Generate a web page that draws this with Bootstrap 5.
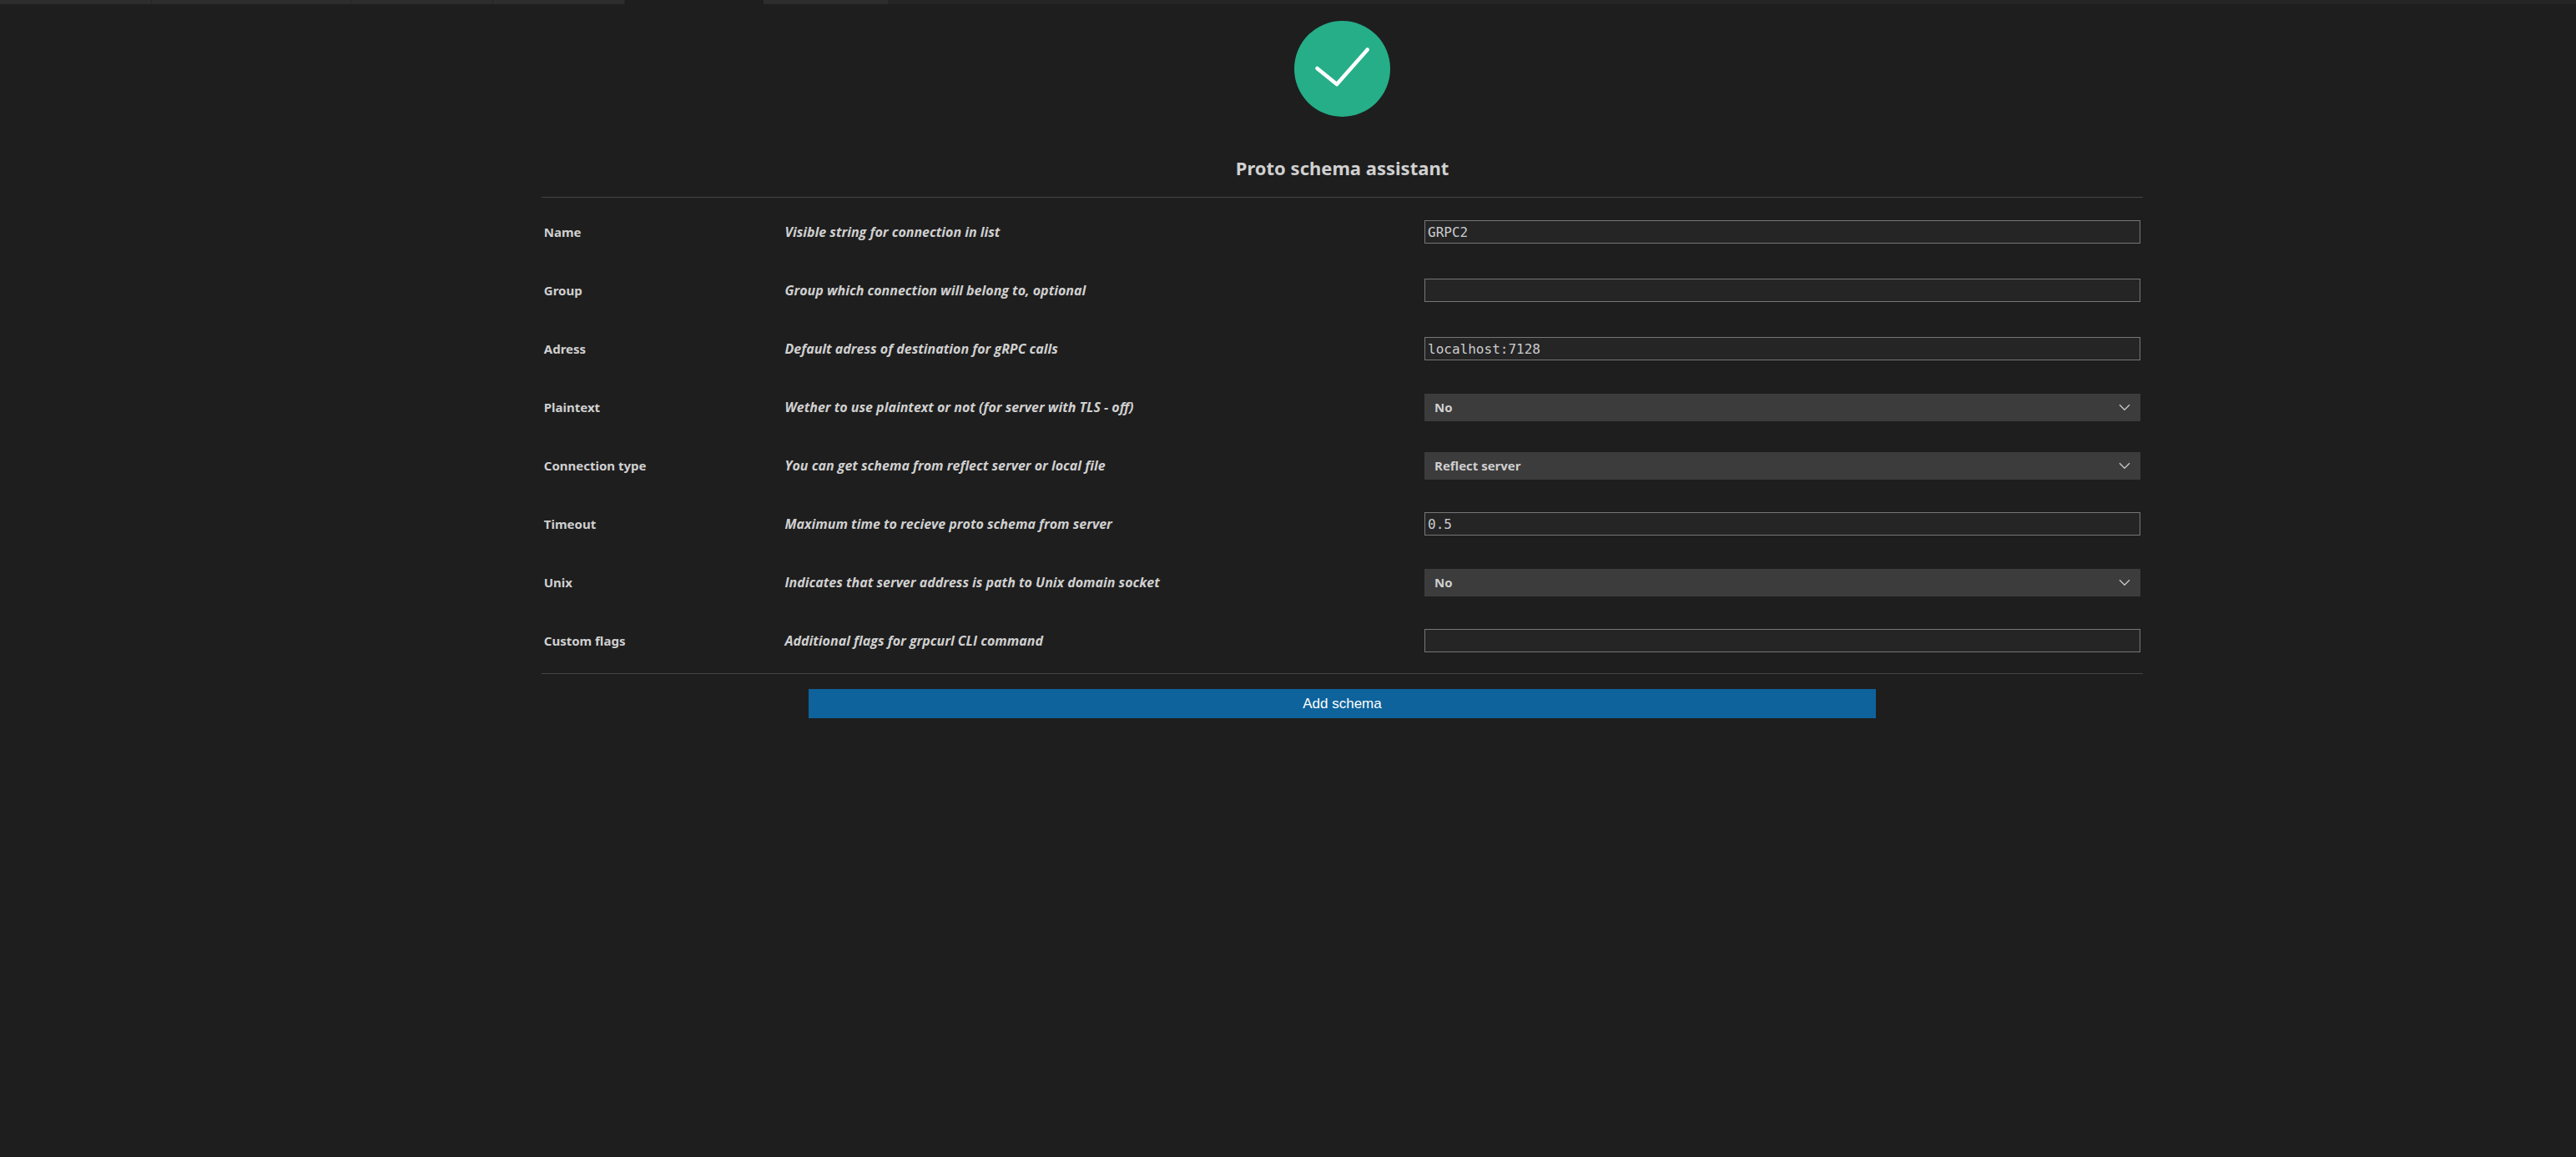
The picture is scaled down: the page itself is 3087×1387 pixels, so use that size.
<!DOCTYPE html>
<html lang="en" data-bs-theme="dark">
<head>
<meta charset="utf-8">
<meta name="viewport" content="width=device-width, initial-scale=1">
<title>Proto schema assistant</title>
<link rel="stylesheet" href="https://cdn.jsdelivr.net/npm/bootstrap@5.3.0/dist/css/bootstrap.min.css">
<style>
  body { background: #1e1e1e; color: #d0d0d0; font-family: "Noto Sans", sans-serif; font-size: 15px; line-height: 20px; }
  .tab-strip { height: 5px; background: #252526; }
  .tab-edge { background: #2d2d2d; border-right: 1px solid #252526; }
  .tab-edge.is-active { background: #1e1e1e; border-color: #1e1e1e; height: 6px; }
  .view { padding: 20px 2px 0 132px; }
  .assistant { width: 65%; }
  .status-icon { width: 115px; height: 115px; }
  .assistant-title { font-size: 22px; line-height: 32px; font-weight: 700; color: #d0d0d0; margin: 45px 0 19px; }
  .rule { border-top: 1px solid #454545; }
  .fields { padding: 6px 2px 4px; }
  .field-row { display: grid; grid-template-columns: 15fr 40fr 45fr; column-gap: 2px; align-items: center; height: 70px; font-weight: 700; }
  .field-row > * { margin: 0 1px; min-width: 0; }
  .field-row em { font-family: "Open Sans", sans-serif; font-size: 16px; }
  .form-control.text-field { width: auto; height: 28px; padding: 0 3px; border: 1px solid #767676; border-radius: 0; background: #252526; color: #cccccc; font: 16px/24px "DejaVu Sans Mono", monospace; }
  .pick { display: grid; align-items: center; }
  .pick > * { grid-area: 1 / 1; }
  .form-select.pick-field { height: 33px; padding: 0 36px 0 12px; border: 0; border-radius: 0; background: #3c3c3c; color: #d0d0d0; font-family: "Open Sans", sans-serif; font-size: 15px; line-height: 20px; font-weight: 700; }
  .pick svg { justify-self: end; margin-right: 12px; pointer-events: none; }
  .btn.add-schema { height: 35px; padding: 0; border: 0; border-radius: 0; background: #0e639c; color: #fff; font: 17px/20px "Liberation Sans", Arial, sans-serif; }
  .actions { margin-top: 18px; }
</style>
</head>
<body>
<div class="tab-strip d-flex" aria-hidden="true">
  <div class="tab-edge" style="width:5.9%"></div>
  <div class="tab-edge" style="width:7.73%"></div>
  <div class="tab-edge" style="width:5.5%"></div>
  <div class="tab-edge" style="width:5.13%"></div>
  <div class="tab-edge is-active" style="width:5.38%"></div>
  <div class="tab-edge" style="width:4.86%"></div>
</div>
<main class="view">
  <form class="assistant mx-auto">
    <header class="text-center">
      <svg class="status-icon d-block mx-auto" viewBox="0 0 115 115" aria-hidden="true">
        <circle cx="57.5" cy="57.5" r="57.5" fill="#25ae88"/>
        <path d="M27.5 57 51 76 87.7 34.5" fill="none" stroke="#fff" stroke-width="4.6" stroke-linecap="round" stroke-linejoin="round"/>
      </svg>
      <h1 class="assistant-title">Proto schema assistant</h1>
    </header>
    <div class="rule"></div>
    <div class="fields">
      <div class="field-row">
        <label for="name">Name</label>
        <em id="name-hint">Visible string for connection in list</em>
        <input class="form-control text-field" id="name" type="text" value="GRPC2" aria-describedby="name-hint">
      </div>
      <div class="field-row">
        <label for="group">Group</label>
        <em id="group-hint">Group which connection will belong to, optional</em>
        <input class="form-control text-field" id="group" type="text" aria-describedby="group-hint">
      </div>
      <div class="field-row">
        <label for="adress">Adress</label>
        <em id="adress-hint">Default adress of destination for gRPC calls</em>
        <input class="form-control text-field" id="adress" type="text" value="localhost:7128" aria-describedby="adress-hint">
      </div>
      <div class="field-row">
        <label for="plaintext">Plaintext</label>
        <em id="plaintext-hint">Wether to use plaintext or not (for server with TLS - off)</em>
        <div class="pick">
          <select class="form-select pick-field" id="plaintext" aria-describedby="plaintext-hint"><option>No</option></select>
          <svg width="14" height="9" viewBox="0 0 14 9" aria-hidden="true"><path d="M1 1.2 7 7.2 13 1.2" fill="none" stroke="#c5c5c5" stroke-width="1.4"/></svg>
        </div>
      </div>
      <div class="field-row">
        <label for="connection">Connection type</label>
        <em id="connection-hint">You can get schema from reflect server or local file</em>
        <div class="pick">
          <select class="form-select pick-field" id="connection" aria-describedby="connection-hint"><option>Reflect server</option></select>
          <svg width="14" height="9" viewBox="0 0 14 9" aria-hidden="true"><path d="M1 1.2 7 7.2 13 1.2" fill="none" stroke="#c5c5c5" stroke-width="1.4"/></svg>
        </div>
      </div>
      <div class="field-row">
        <label for="timeout">Timeout</label>
        <em id="timeout-hint">Maximum time to recieve proto schema from server</em>
        <input class="form-control text-field" id="timeout" type="text" value="0.5" aria-describedby="timeout-hint">
      </div>
      <div class="field-row">
        <label for="unix">Unix</label>
        <em id="unix-hint">Indicates that server address is path to Unix domain socket</em>
        <div class="pick">
          <select class="form-select pick-field" id="unix" aria-describedby="unix-hint"><option>No</option></select>
          <svg width="14" height="9" viewBox="0 0 14 9" aria-hidden="true"><path d="M1 1.2 7 7.2 13 1.2" fill="none" stroke="#c5c5c5" stroke-width="1.4"/></svg>
        </div>
      </div>
      <div class="field-row">
        <label for="flags">Custom flags</label>
        <em id="flags-hint">Additional flags for grpcurl CLI command</em>
        <input class="form-control text-field" id="flags" type="text" aria-describedby="flags-hint">
      </div>
    </div>
    <div class="rule"></div>
    <div class="actions row g-0 justify-content-center">
      <button class="btn add-schema col-8" type="button">Add schema</button>
    </div>
  </form>
</main>
<script src="https://cdn.jsdelivr.net/npm/bootstrap@5.3.0/dist/js/bootstrap.bundle.min.js"></script>
</body>
</html>
